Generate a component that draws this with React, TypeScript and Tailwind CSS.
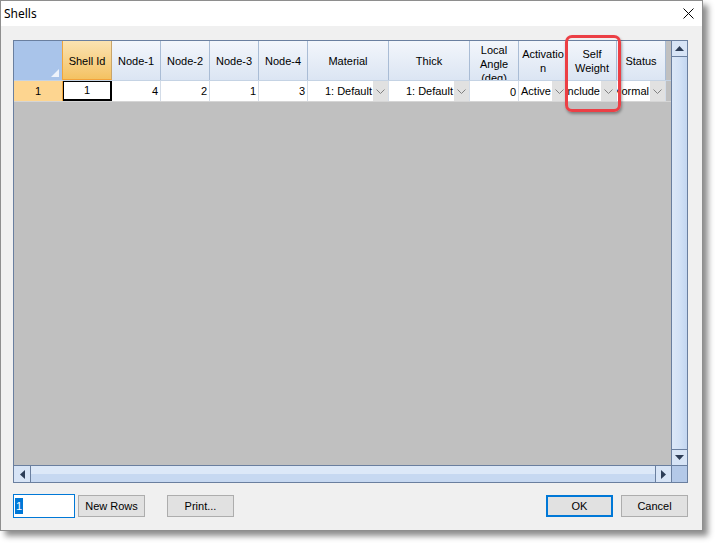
import React from "react";

function Chevron() {
  return (
    <svg width="9" height="5" viewBox="0 0 9 5">
      <path d="M0.5 0.5 L4.5 4.5 L8.5 0.5" fill="none" stroke="#808080" strokeWidth="1" />
    </svg>
  );
}

function DropCell({ className, text }: { className: string; text: string }) {
  return (
    <div className={`${className} h-full flex border-r border-[#d3dce8] bg-white`}>
      <div className="flex-1 min-w-0 overflow-hidden flex justify-end items-center pr-[1px] whitespace-nowrap">
        <span>{text}</span>
      </div>
      <div className="w-[15px] h-[20px] bg-[#e1e1e1] flex items-center justify-center">
        <Chevron />
      </div>
    </div>
  );
}

function HeadCell({ className, lines, top }: { className: string; lines: string[]; top?: boolean }) {
  return (
    <div
      className={`${className} h-full border-r border-[#a9bcd5] bg-gradient-to-b from-[#f3f6fb] to-[#dbe5f3] flex flex-col items-center ${top ? "justify-start pt-[2px]" : "justify-center pt-[1px]"} overflow-hidden leading-[14px] whitespace-nowrap text-center`}
    >
      {lines.map((l, i) => (
        <span key={i}>{l}</span>
      ))}
    </div>
  );
}

function NumCell({ className, text }: { className: string; text: string }) {
  return (
    <div className={`${className} h-full border-r border-[#d3dce8] bg-white flex items-center justify-end pr-[2px]`}>
      {text}
    </div>
  );
}

export default function App() {
  return (
    <div className="w-[718px] h-[546px] bg-white relative overflow-hidden font-['Liberation_Sans',Arial,sans-serif] text-[11px] text-black">
      <div className="w-[703px] h-[531px] border border-[#8e8e8e] flex flex-col shadow-[5px_5px_6px_rgba(0,0,0,0.45)]">
        {/* title bar */}
        <div className="h-[25px] bg-white flex items-center justify-between pl-[3px] pr-[8px]">
          <span className="font-['Noto_Sans',sans-serif] text-[12px] text-black">Shells</span>
          <svg width="11" height="11" viewBox="0 0 11 11">
            <path d="M0.5 0.5 L10.5 10.5 M10.5 0.5 L0.5 10.5" stroke="#000" strokeWidth="1" />
          </svg>
        </div>
        {/* body */}
        <div className="flex-1 bg-[#f0f0f0] pl-[12px] pt-[14px] flex flex-col">
          {/* grid */}
          <div className="w-[675px] h-[443px] border border-[#6a7f9f] flex flex-col">
            <div className="flex-1 flex min-h-0">
              {/* cells area */}
              <div className="flex-1 bg-[#c0c0c0] flex flex-col">
                <div className="h-[40px] flex border-b border-[#c5d3e4]">
                  <div className="w-[49px] h-full bg-[#a9c4ea] border-r border-[#f0a53c] relative">
                    <svg className="absolute right-[3px] bottom-[3px]" width="8" height="8" viewBox="0 0 8 8">
                      <path d="M8 0 L8 8 L0 8 Z" fill="#eef3fb" />
                    </svg>
                  </div>
                  <div className="w-[49px] h-full border-r border-[#c9a56a] border-b border-b-[#f2a23a] bg-gradient-to-b from-[#fbe3b1] to-[#f4c261] flex items-center justify-center pt-[2px]">
                    Shell Id
                  </div>
                  <HeadCell className="w-[49px]" lines={["Node-1"]} />
                  <HeadCell className="w-[49px]" lines={["Node-2"]} />
                  <HeadCell className="w-[49px]" lines={["Node-3"]} />
                  <HeadCell className="w-[49px]" lines={["Node-4"]} />
                  <HeadCell className="w-[81px]" lines={["Material"]} />
                  <HeadCell className="w-[81px]" lines={["Thick"]} />
                  <HeadCell className="w-[49px]" lines={["Local", "Angle", "(deg)"]} top />
                  <HeadCell className="w-[49px]" lines={["Activatio", "n"]} />
                  <HeadCell className="w-[49px]" lines={["Self", "Weight"]} />
                  <HeadCell className="w-[49px]" lines={["Status"]} />
                </div>
                <div className="h-[21px] flex border-b border-[#d5d5d5]">
                  <div className="w-[49px] h-full bg-[#fdd590] border-r border-[#f0a53c] flex items-center justify-center">
                    1
                  </div>
                  <div className="w-[49px] h-full bg-white border border-black border-r-2 border-b-2 flex items-center justify-center">
                    1
                  </div>
                  <NumCell className="w-[49px]" text="4" />
                  <NumCell className="w-[49px]" text="2" />
                  <NumCell className="w-[49px]" text="1" />
                  <NumCell className="w-[49px]" text="3" />
                  <DropCell className="w-[81px]" text="1: Default" />
                  <DropCell className="w-[81px]" text="1: Default" />
                  <div className="w-[49px] h-full border-r border-[#d3dce8] bg-white flex items-center justify-end pr-[2px] pt-[3px]">
                    0
                  </div>
                  <DropCell className="w-[49px]" text="Active" />
                  <DropCell className="w-[49px]" text="Include" />
                  <DropCell className="w-[49px]" text="Normal" />
                </div>
              </div>
              {/* vertical scrollbar */}
              <div className="w-[16px] border-l border-[#6a7f9f] flex flex-col">
                <div className="h-[16px] border-b border-[#6a7f9f] bg-[#d7e4f6] flex items-center justify-center">
                  <svg width="9" height="5" viewBox="0 0 9 5">
                    <path d="M4.5 0 L9 5 L0 5 Z" fill="#2d3d57" />
                  </svg>
                </div>
                <div className="flex-1 bg-gradient-to-r from-[#dce8f8] via-[#d3e2f6] to-[#c3d6f0]" />
                <div className="h-[16px] border-t border-[#6a7f9f] bg-[#d7e4f6] flex items-center justify-center">
                  <svg width="9" height="5" viewBox="0 0 9 5">
                    <path d="M0 0 L9 0 L4.5 5 Z" fill="#2d3d57" />
                  </svg>
                </div>
              </div>
            </div>
            {/* horizontal scrollbar */}
            <div className="h-[17px] border-t border-[#6a7f9f] flex">
              <div className="w-[17px] border-r border-[#6a7f9f] bg-[#d7e4f6] flex items-center justify-center">
                <svg width="5" height="9" viewBox="0 0 5 9">
                  <path d="M5 0 L5 9 L0 4.5 Z" fill="#2d3d57" />
                </svg>
              </div>
              <div className="flex-1 flex flex-col">
                <div className="flex-1 bg-[#dce8f8]" />
                <div className="flex-1 bg-[#c6d8f1]" />
              </div>
              <div className="w-[16px] border-l border-[#6a7f9f] bg-[#d7e4f6] flex items-center justify-center">
                <svg width="5" height="9" viewBox="0 0 5 9">
                  <path d="M0 0 L5 4.5 L0 9 Z" fill="#2d3d57" />
                </svg>
              </div>
              <div className="w-[16px] border-l border-[#6a7f9f] bg-[#b4c9e8]" />
            </div>
          </div>
          {/* buttons row */}
          <div className="mt-[11px] w-[675px] h-[24px] flex items-center">
            <div className="w-[62px] h-[24px] border border-[#0078d7] bg-white flex items-center pl-[1px]">
              <span className="bg-[#0078d7] text-white px-[1px] leading-[16px]">1</span>
            </div>
            <button className="ml-[3px] w-[67px] h-[22px] border border-[#adadad] bg-[#e1e1e1]">New Rows</button>
            <button className="ml-[22px] w-[67px] h-[22px] border border-[#adadad] bg-[#e1e1e1]">Print...</button>
            <div className="flex-1" />
            <button className="w-[67px] h-[22px] border-2 border-[#0078d7] bg-[#e1e1e1]">OK</button>
            <button className="ml-[8px] w-[67px] h-[22px] border border-[#adadad] bg-[#e1e1e1]">Cancel</button>
          </div>
        </div>
      </div>
      {/* red annotation */}
      <div className="absolute left-[565px] top-[35px] w-[56px] h-[77px] border-[3px] border-[#ec3f45] rounded-[7px] shadow-[1px_2px_3px_rgba(0,0,0,0.35)]" />
    </div>
  );
}
